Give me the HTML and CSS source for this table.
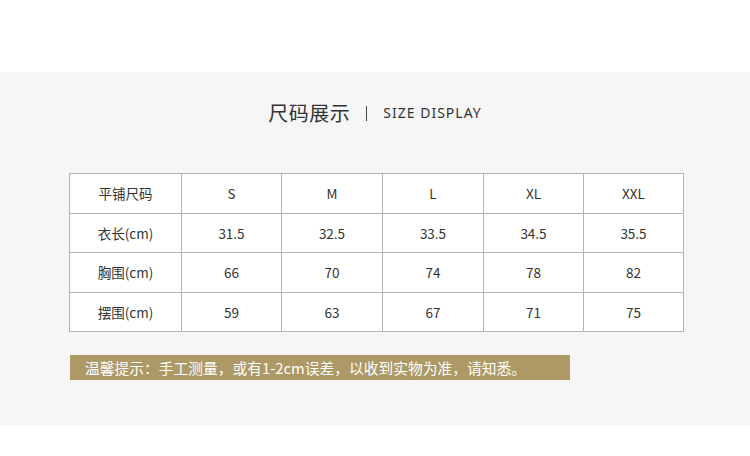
FILE: index.html
```html
<!DOCTYPE html>
<html lang="zh-CN">
<head>
<meta charset="utf-8">
<title>尺码展示</title>
<link rel="stylesheet" href="styles.css">
</head>
<body>
<div class="top-space"></div>
<section class="size-section">
  <h2 class="title"><span class="title-cn">尺码展示</span><span class="title-sep"></span><span class="title-en">SIZE DISPLAY</span></h2>
  <table class="size-table">
    <colgroup>
      <col class="c-first"><col class="c1"><col class="c2"><col class="c3"><col class="c4"><col class="c5">
    </colgroup>
    <tr><td>平铺尺码</td><td>S</td><td>M</td><td>L</td><td>XL</td><td>XXL</td></tr>
    <tr><td>衣长(cm)</td><td>31.5</td><td>32.5</td><td>33.5</td><td>34.5</td><td>35.5</td></tr>
    <tr><td>胸围(cm)</td><td>66</td><td>70</td><td>74</td><td>78</td><td>82</td></tr>
    <tr><td>摆围(cm)</td><td>59</td><td>63</td><td>67</td><td>71</td><td>75</td></tr>
  </table>
  <div class="notice">温馨提示：手工测量，或有1-2cm误差，以收到实物为准，请知悉。</div>
</section>
</body>
</html>
```
FILE: styles.css
```css
html, body {
  margin: 0;
  padding: 0;
  background: #ffffff;
}
body {
  width: 750px;
  height: 456px;
  overflow: hidden;
  font-family: "Noto Sans CJK SC", "Noto Sans", sans-serif;
  color: #333333;
}
.top-space {
  height: 72px;
}
.size-section {
  background: #f6f6f6;
  height: 353px;
  box-sizing: border-box;
  padding: 29px 0 0 69px;
  display: flex;
  flex-direction: column;
  align-items: flex-start;
}
.title {
  margin: 0;
  width: 612px;
  height: 24px;
  display: flex;
  align-items: center;
  justify-content: center;
  font-weight: normal;
}
.title-cn {
  font-size: 20px;
  line-height: 24px;
  color: #333;
  letter-spacing: 0.5px;
}
.title-sep {
  width: 1px;
  height: 15px;
  background: #444;
  margin: 0 16px 0 16px;
}
.title-en {
  font-family: "Noto Sans", "Open Sans", sans-serif;
  font-size: 14px;
  letter-spacing: 1px;
  line-height: 24px;
  color: #333;
}
.size-table {
  margin-top: 48px;
  border-collapse: collapse;
  background: #ffffff;
  table-layout: fixed;
  width: 615px;
}
.c-first { width: 112px; }
.c1 { width: 100px; }
.c2 { width: 101px; }
.c3 { width: 101px; }
.c4 { width: 100px; }
.c5 { width: 100px; }
.size-table td {
  border: 1px solid #b4b4b4;
  height: 38.5px;
  padding: 0;
  text-align: center;
  font-size: 13.5px;
  color: #333;
  line-height: 20px;
}
.notice {
  margin-top: 23px;
  margin-left: 1px;
  width: 500px;
  height: 25px;
  box-sizing: border-box;
  background: #ac9965;
  color: #ffffff;
  font-size: 14.75px;
  line-height: 25px;
  padding-left: 15px;
  white-space: nowrap;
}
```
